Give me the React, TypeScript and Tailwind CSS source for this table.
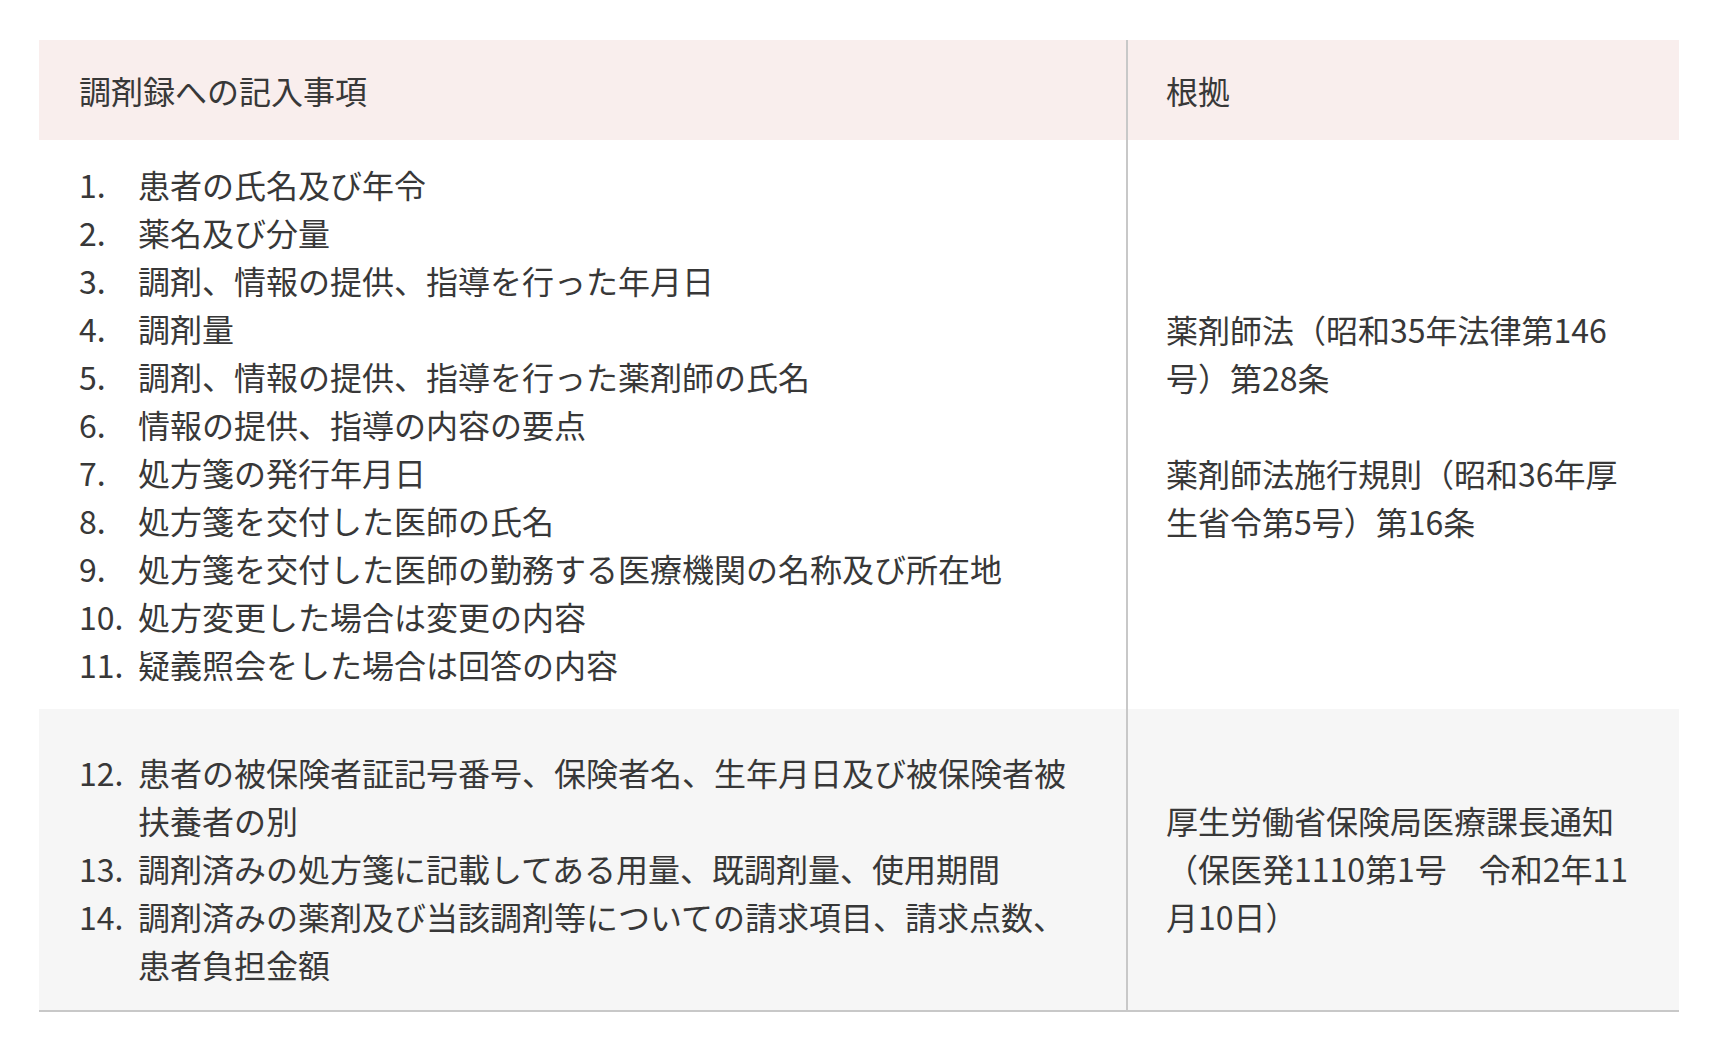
const itemsA = [
  "患者の氏名及び年令",
  "薬名及び分量",
  "調剤、情報の提供、指導を行った年月日",
  "調剤量",
  "調剤、情報の提供、指導を行った薬剤師の氏名",
  "情報の提供、指導の内容の要点",
  "処方箋の発行年月日",
  "処方箋を交付した医師の氏名",
  "処方箋を交付した医師の勤務する医療機関の名称及び所在地",
  "処方変更した場合は変更の内容",
  "疑義照会をした場合は回答の内容",
];

const itemsB = [
  "患者の被保険者証記号番号、保険者名、生年月日及び被保険者被扶養者の別",
  "調剤済みの処方箋に記載してある用量、既調剤量、使用期間",
  "調剤済みの薬剤及び当該調剤等についての請求項目、請求点数、患者負担金額",
];

function Items({ items, start }: { items: string[]; start: number }) {
  return (
    <ol>
      {items.map((text, i) => (
        <li key={text} className="flex">
          <span className="w-[59px] shrink-0">{start + i}.</span>
          <span className="flex-1">{text}</span>
        </li>
      ))}
    </ol>
  );
}

export default function App() {
  return (
    <div
      className="min-h-screen bg-white pt-[40px] pl-[39px] text-[32px] leading-[48px] text-[#383838]"
      style={{ fontFamily: '"Noto Sans CJK JP", "Noto Sans", sans-serif' }}
    >
      <div className="w-[1640px] border-b-2 border-[#c8c8c8]">
        {/* header */}
        <div className="flex h-[100px] bg-[#f9eeed]">
          <div className="w-[1089px] shrink-0 border-r-2 border-[#c8c8c8] pl-[40px] flex items-center">
            調剤録への記入事項
          </div>
          <div className="flex-1 pl-[38px] flex items-center">根拠</div>
        </div>

        {/* row 1 */}
        <div className="flex">
          <div className="w-[1089px] shrink-0 border-r-2 border-[#c8c8c8] pl-[40px] pr-[44px] pt-[20px] pb-[21px]">
            <Items items={itemsA} start={1} />
          </div>
          <div className="flex-1 pl-[38px] pr-[45px] flex flex-col justify-center">
            <p>薬剤師法（昭和35年法律第146号）第28条</p>
            <p className="mt-[48px]">薬剤師法施行規則（昭和36年厚生省令第5号）第16条</p>
          </div>
        </div>

        {/* row 2 */}
        <div className="flex bg-[#f6f6f6]">
          <div className="w-[1089px] shrink-0 border-r-2 border-[#c8c8c8] pl-[40px] pr-[44px] pt-[39px] pb-[22px]">
            <Items items={itemsB} start={12} />
          </div>
          <div className="flex-1 pl-[38px] pr-[45px] pt-[39px] pb-[22px] flex flex-col justify-center">
            <p>厚生労働省保険局医療課長通知（保医発1110第1号　令和2年11月10日）</p>
          </div>
        </div>
      </div>
    </div>
  );
}
